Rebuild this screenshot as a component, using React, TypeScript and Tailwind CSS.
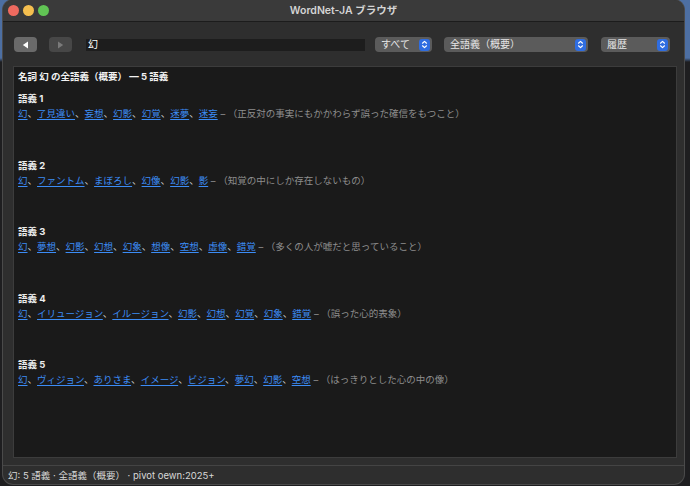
import React from 'react';

type Sense = { n: number; words: string[]; gloss: string };

const SENSES: Sense[] = [
  { n: 1, words: ['幻', '了見違い', '妄想', '幻影', '幻覚', '迷夢', '迷妄'], gloss: '（正反対の事実にもかかわらず誤った確信をもつこと）' },
  { n: 2, words: ['幻', 'ファントム', 'まぼろし', '幻像', '幻影', '影'], gloss: '（知覚の中にしか存在しないもの）' },
  { n: 3, words: ['幻', '夢想', '幻影', '幻想', '幻象', '想像', '空想', '虚像', '錯覚'], gloss: '（多くの人が嘘だと思っていること）' },
  { n: 4, words: ['幻', 'イリュージョン', 'イルージョン', '幻影', '幻想', '幻覚', '幻象', '錯覚'], gloss: '（誤った心的表象）' },
  { n: 5, words: ['幻', 'ヴィジョン', 'ありさま', 'イメージ', 'ビジョン', '夢幻', '幻影', '空想'], gloss: '（はっきりとした心の中の像）' },
];

const FONT = "font-['Inter','Noto_Sans_CJK_JP',sans-serif]";

// blue stepper square of a macOS popup button
function Stepper() {
  return (
    <span className="flex h-[12px] w-[11px] items-center justify-center rounded-[3px] bg-[#2f6de1]">
      <svg width="7" height="9" viewBox="0 0 7 9" fill="none" stroke="white" strokeWidth="1.2" strokeLinecap="round" strokeLinejoin="round">
        <path d="M1.5 3.2 L3.5 1.4 L5.5 3.2" />
        <path d="M1.5 5.8 L3.5 7.6 L5.5 5.8" />
      </svg>
    </span>
  );
}

function Popup({ label, width }: { label: string; width: string }) {
  return (
    <div className={`flex h-[15px] items-center justify-between rounded-[4px] bg-[#5b5b5b] pl-[6px] pr-[2px] text-[10px] text-[#e6e6e6] ${width}`}>
      <span>{label}</span>
      <Stepper />
    </div>
  );
}

export default function App() {
  return (
    <div className={`h-[486px] w-[690px] overflow-hidden bg-[linear-gradient(to_bottom,#4d6fa3_0px,#4d6fa3_58px,#1e1e20_62px,#1e1e20_100%)] ${FONT}`}>
      <div className="ml-[3px] flex h-[484px] w-[681px] flex-col overflow-hidden rounded-[10px] bg-[#2e2e2e] shadow-[0_0_0_1px_#4a4a4a]">
        {/* title bar */}
        <div className="relative flex h-[22px] items-center border-b border-[#1c1c1c] bg-[#3a3a3a] pl-[5px]">
          <div className="flex gap-[4px]">
            <span className="h-[11px] w-[11px] rounded-full bg-[#ee6a5f]" />
            <span className="h-[11px] w-[11px] rounded-full bg-[#f5bf4f]" />
            <span className="h-[11px] w-[11px] rounded-full bg-[#61c454]" />
          </div>
          <div className="absolute inset-0 flex items-center justify-center text-[10.5px] font-semibold text-[#d4d4d4]">
            WordNet-JA ブラウザ
          </div>
        </div>

        {/* toolbar */}
        <div className="flex h-[44px] items-center pl-[11px] pr-[13px] pt-[1px]">
          <button className="flex h-[15px] w-[23px] items-center justify-center rounded-[4px] bg-[#6a6a6a]">
            <svg width="7" height="8" viewBox="0 0 7 8"><path d="M6 0.5 L0.8 4 L6 7.5 Z" fill="white" /></svg>
          </button>
          <button className="ml-[12px] flex h-[15px] w-[23px] items-center justify-center rounded-[4px] bg-[#474747]">
            <svg width="7" height="8" viewBox="0 0 7 8"><path d="M1 0.5 L6.2 4 L1 7.5 Z" fill="#7a7a7a" /></svg>
          </button>
          <div className="ml-[14px] flex h-[12px] w-[279px] items-center bg-[#1d1d1d] pl-[2px] text-[10px] text-white">幻</div>
          <div className="ml-[10px]"><Popup label="すべて" width="w-[57px]" /></div>
          <div className="ml-[12px]"><Popup label="全語義（概要）" width="w-[144px]" /></div>
          <div className="ml-[13px]"><Popup label="履歴" width="w-[69px]" /></div>
        </div>

        {/* content */}
        <div className="ml-[10px] mr-[7px] h-[392px] border border-[#3c3c3c] bg-[#1a1a1a] px-[4px] pt-[2px] text-[9.5px] leading-[15px]">
          <div className="font-bold text-[#f2f2f2]">名詞 幻 の全語義（概要） — 5 語義</div>
          <div className="mt-[7px] flex flex-col gap-[36.5px]">
            {SENSES.map((s) => (
              <div key={s.n}>
                <div className="font-bold text-[#ececec]">語義 {s.n}</div>
                <div className="text-[#cfcfcf]">
                  {s.words.map((w, i) => (
                    <React.Fragment key={i}>
                      {i > 0 && '、'}
                      <span className="text-[#3c8cf5] underline underline-offset-2">{w}</span>
                    </React.Fragment>
                  ))}
                  <span className="text-[#8e8e8e]"> – {s.gloss}</span>
                </div>
              </div>
            ))}
          </div>
        </div>

        {/* status bar */}
        <div className="mt-[7px] flex flex-1 items-center border-t border-[#444] px-[5px] pt-[2px] text-[9.5px] text-[#d8d8d8]">
          幻: 5 語義 · 全語義（概要） · pivot oewn:2025+
        </div>
      </div>
    </div>
  );
}
